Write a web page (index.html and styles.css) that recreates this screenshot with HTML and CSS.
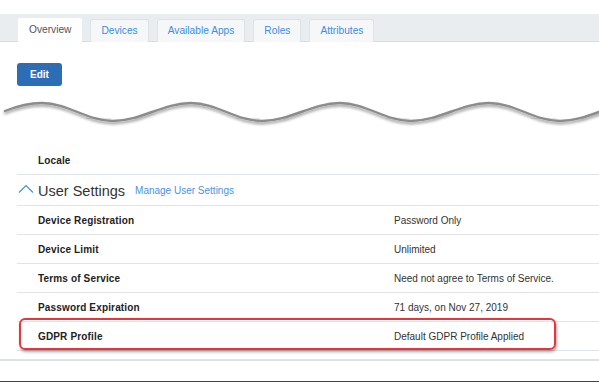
FILE: index.html
```html
<!DOCTYPE html>
<html lang="en">
  <head>
    <meta charset="UTF-8" />
    <title>User Overview</title>
    <link rel="stylesheet" href="styles.css">
  </head>
  <body>
    <div class="tab-bar">
      <button class="tab active">Overview</button>
      <button class="tab">Devices</button>
      <button class="tab">Available Apps</button>
      <button class="tab">Roles</button>
      <button class="tab">Attributes</button>
    </div>

    <div class="actions">
      <button class="edit-button">Edit</button>
    </div>

    <svg class="tear" width="599" height="60" viewBox="0 0 599 60">
      <defs>
        <filter id="tear-shadow" x="-5%" y="-50%" width="110%" height="200%">
          <feGaussianBlur in="SourceAlpha" stdDeviation="1.4" />
          <feOffset dx="0" dy="2" result="blur" />
          <feComponentTransfer>
            <feFuncA type="linear" slope="0.45" />
          </feComponentTransfer>
          <feMerge>
            <feMergeNode />
            <feMergeNode in="SourceGraphic" />
          </feMerge>
        </filter>
      </defs>
      <!-- bits of the page border peeking out under the tear -->
      <path class="tear-edge" d="M86 32.5 H111 M236 32.5 H260 M386 32.5 H409 M531 32.5 H556" />
      <path class="tear-line"
        d="M5 25 C 15 21, 28 17, 42 17
           C 68 17, 87 35, 113 35
           C 141 35, 163 17, 191 17
           C 217 17, 236 35, 262 35
           C 290 35, 312 17, 340 17
           C 366 17, 385 35, 411 35
           C 439 35, 461 17, 489 17
           C 515 17, 534 35, 560 35
           C 588 35, 610 17, 638 17"
        filter="url(#tear-shadow)" />
    </svg>

    <div class="details">
      <div class="row">
        <div class="label">Locale</div>
        <div class="value"></div>
      </div>

      <div class="section-header">
        <svg class="chevron" width="16" height="10" viewBox="0 0 16 10">
          <polyline points="1,8.5 8,1.5 15,8.5" />
        </svg>
        <span class="section-title">User Settings</span>
        <a class="section-link" href="#">Manage User Settings</a>
      </div>

      <div class="row">
        <div class="label">Device Registration</div>
        <div class="value">Password Only</div>
      </div>
      <div class="row">
        <div class="label">Device Limit</div>
        <div class="value">Unlimited</div>
      </div>
      <div class="row">
        <div class="label">Terms of Service</div>
        <div class="value">Need not agree to Terms of Service.</div>
      </div>
      <div class="row">
        <div class="label">Password Expiration</div>
        <div class="value">71 days, on Nov 27, 2019</div>
      </div>
      <div class="row highlighted">
        <div class="label">GDPR Profile</div>
        <div class="value">Default GDPR Profile Applied</div>
      </div>
    </div>

    <div class="section-end"></div>
    <div class="page-bottom"></div>
  </body>
</html>
```

FILE: styles.css
```css
body {
  font-family: "Liberation Sans", Arial, sans-serif;
  background-color: white;
  margin: 0;
  padding-top: 14px;
  color: #222;
}

.tab-bar {
  display: flex;
  align-items: flex-end;
  gap: 8px;
  height: 27px;
  padding-left: 18px;
  background-color: #e9edf0;
  border-bottom: 1px solid #d8dde2;
}

.tab {
  height: 23px;
  margin-bottom: -1px;
  padding: 0 10px 1px;
  border: 1px solid #dde2e7;
  border-bottom: none;
  border-radius: 3px 3px 0 0;
  background-color: #f5f7f9;
  color: #3b8fe0;
  font-family: inherit;
  font-size: 10.2px;
  cursor: pointer;
}

.tab.active {
  background-color: white;
  border-color: white;
  color: #555;
  height: 24px;
  padding: 0 10px 2px;
}

.actions {
  padding: 21px 0 0 17px;
}

.edit-button {
  display: block;
  width: 45px;
  height: 23px;
  border: none;
  border-radius: 3px;
  background-color: #2c6db6;
  color: white;
  font-family: inherit;
  font-size: 10px;
  font-weight: bold;
  cursor: pointer;
}

.tear {
  display: block;
}

.tear-edge {
  fill: none;
  stroke: #e6e8ea;
  stroke-width: 1.2;
}

.tear-line {
  fill: none;
  stroke: #8c8c8c;
  stroke-width: 2.4;
  stroke-linecap: round;
}

.details {
  margin-left: 17px;
}

.row,
.section-header {
  position: relative;
  display: flex;
  align-items: center;
  height: 28px;
  border-bottom: 1px solid #e1e4e7;
  font-size: 10px;
}

.label {
  width: 356px;
  padding-left: 21px;
  font-weight: bold;
  letter-spacing: 0.15px;
  color: #222;
}

.value {
  color: #333;
}

.section-header {
  box-sizing: border-box;
  height: 31px;
  padding-top: 1px;
}

.chevron {
  margin: 0 4px 4px 1px;
}

.chevron polyline {
  fill: none;
  stroke: #4a8fd6;
  stroke-width: 1.2;
}

.section-title {
  font-size: 14.5px;
  color: #333;
  margin-right: 10px;
}

.section-link {
  color: #4a93e0;
  text-decoration: none;
  font-size: 10px;
}

.highlighted::after {
  content: "";
  position: absolute;
  left: 2px;
  top: -4px;
  width: 533px;
  height: 28px;
  border: 2px solid #e8353b;
  border-radius: 6px;
  box-shadow: 1px 2px 3px rgba(0, 0, 0, 0.35);
}

.section-end {
  margin-top: 8px;
  height: 2px;
  background-color: #dfe3e6;
}

.page-bottom {
  margin-top: 20px;
  height: 1px;
  background-color: #444;
}
```
